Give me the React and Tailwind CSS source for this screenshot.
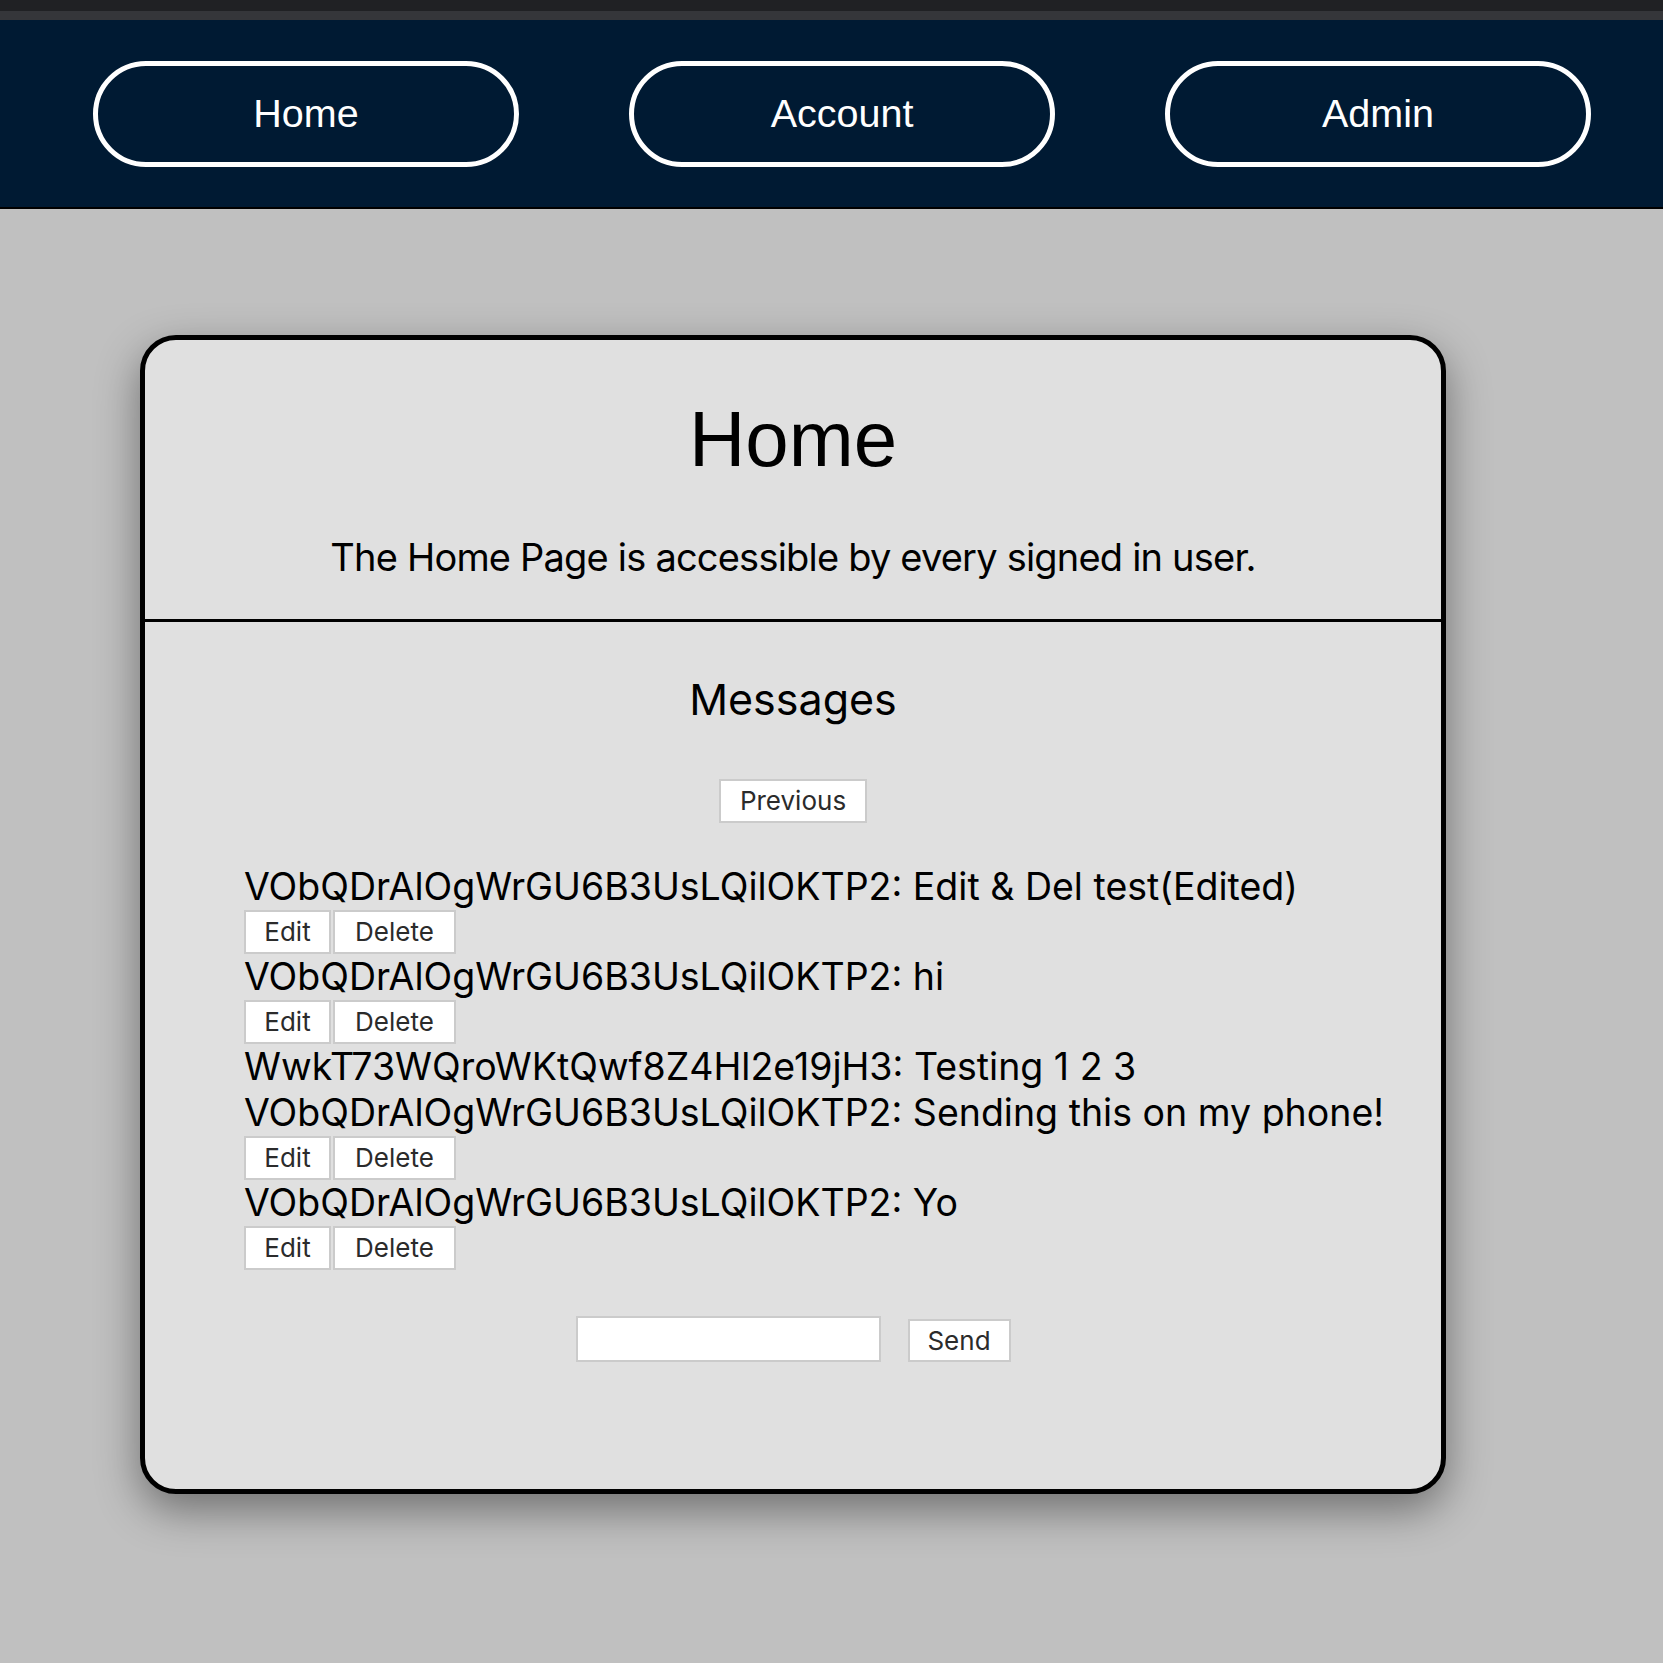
import React, { useState } from "react";

const messages = [
  { uid: "VObQDrAlOgWrGU6B3UsLQilOKTP2", text: "Edit & Del test(Edited)", own: true },
  { uid: "VObQDrAlOgWrGU6B3UsLQilOKTP2", text: "hi", own: true },
  { uid: "WwkT73WQroWKtQwf8Z4Hl2e19jH3", text: "Testing 1 2 3", own: false },
  { uid: "VObQDrAlOgWrGU6B3UsLQilOKTP2", text: "Sending this on my phone!", own: true },
  { uid: "VObQDrAlOgWrGU6B3UsLQilOKTP2", text: "Yo", own: true },
];

const btn =
  "h-[44px] bg-white border-2 border-[#cbcbcb] text-[#2b2b2b] text-[26px] leading-none font-['Inter',sans-serif] flex items-center justify-center";

const NavButton = ({ label }) => (
  <button className="w-[426px] h-[106px] rounded-full border-[5px] border-white text-white text-[39.5px] font-['Liberation_Sans',Arial,sans-serif]">
    {label}
  </button>
);

const App = () => {
  const [draft, setDraft] = useState("");

  return (
    <div className="min-h-[1663px] bg-[#c0c0c0] font-['Inter',sans-serif]">
      {/* browser chrome strip */}
      <div className="h-[11px] bg-[#202124]" />
      <div className="h-[9px] bg-[#35363a]" />

      {/* Navigation */}
      <nav className="h-[189px] bg-[#001a33] border-b-2 border-black flex items-start pt-[41px] pl-[93px] gap-[110px]">
        <NavButton label="Home" />
        <NavButton label="Account" />
        <NavButton label="Admin" />
      </nav>

      {/* Card */}
      <div className="mt-[126px] ml-[140px] w-[1306px] bg-[#e0e0e0] border-[5px] border-black rounded-[36px] shadow-[0_16px_44px_rgba(0,0,0,0.42)] text-black">
        <div className="pt-[61px] pb-[38px] text-center">
          <h1 className="text-[78px] leading-[76px] font-['Liberation_Sans',Arial,sans-serif]">Home</h1>
          <p className="mt-[56px] text-[38px] leading-[48px] tracking-[-0.8px]">
            The Home Page is accessible by every signed in user.
          </p>
        </div>

        <div className="border-t-[3px] border-black" />

        <div className="pt-[51px] pb-[127px]">
          <h2 className="text-center text-[43px] leading-[52px]">Messages</h2>

          <div className="mt-[54px] flex justify-center">
            <button className={`${btn} w-[148px]`}>Previous</button>
          </div>

          <div className="mt-[41px] pl-[99px]">
            {messages.map((m, i) => (
              <div key={i}>
                <p className="text-[37.5px] leading-[46px]">
                  {m.uid}: {m.text}
                </p>
                {m.own && (
                  <div className="flex gap-[2px]">
                    <button className={`${btn} w-[87px]`}>Edit</button>
                    <button className={`${btn} w-[123px]`}>Delete</button>
                  </div>
                )}
              </div>
            ))}
          </div>

          <div className="mt-[46px] flex justify-center items-end gap-[27px]">
            <input
              value={draft}
              onChange={(e) => setDraft(e.target.value)}
              className="w-[305px] h-[46px] bg-white border-2 border-[#cbcbcb] outline-none px-2 text-[24px]"
            />
            <button className={`${btn} w-[103px] !h-[43px]`}>Send</button>
          </div>
        </div>
      </div>
    </div>
  );
};

export default App;
